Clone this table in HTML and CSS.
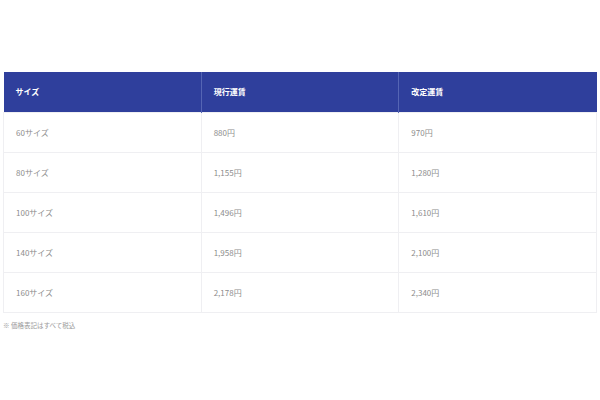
FILE: index.html
```html
<!DOCTYPE html>
<html lang="ja">
<head>
<meta charset="utf-8">
<link rel="stylesheet" href="styles.css">
</head>
<body>
<div class="wrap">
  <table class="fare">
    <thead>
      <tr><th>サイズ</th><th>現行運賃</th><th>改定運賃</th></tr>
    </thead>
    <tbody>
      <tr><td>60サイズ</td><td>880円</td><td>970円</td></tr>
      <tr><td>80サイズ</td><td>1,155円</td><td>1,280円</td></tr>
      <tr><td>100サイズ</td><td>1,496円</td><td>1,610円</td></tr>
      <tr><td>140サイズ</td><td>1,958円</td><td>2,100円</td></tr>
      <tr><td>160サイズ</td><td>2,178円</td><td>2,340円</td></tr>
    </tbody>
  </table>
  <p class="note">※ 価格表記はすべて税込</p>
</div>
</body>
</html>
```
FILE: styles.css
```css
html, body { margin: 0; padding: 0; background: #fff; }
body { font-family: "Noto Sans CJK JP", "Noto Sans", sans-serif; }
.wrap { padding: 72px 3px 0 3px; }
.fare {
  width: 594px;
  border-collapse: collapse;
  table-layout: fixed;
}
.fare th, .fare td {
  height: 40px;
  padding: 0 0 0 12px;
  text-align: left;
  box-sizing: border-box;
  font-size: 8px;
  vertical-align: middle;
}
.fare th {
  background: #2f3f9c;
  color: #fff;
  font-weight: 700;
  border-left: 1px solid #5565b4;
}
.fare th:first-child { border-left: none; }
.fare td {
  color: #8c8c8c;
  border: 1px solid #efeff2;
  font-weight: 400;
}
.note {
  margin: 7px 0 0 0;
  font-size: 6.5px;
  color: #9a9a9a;
}
```
